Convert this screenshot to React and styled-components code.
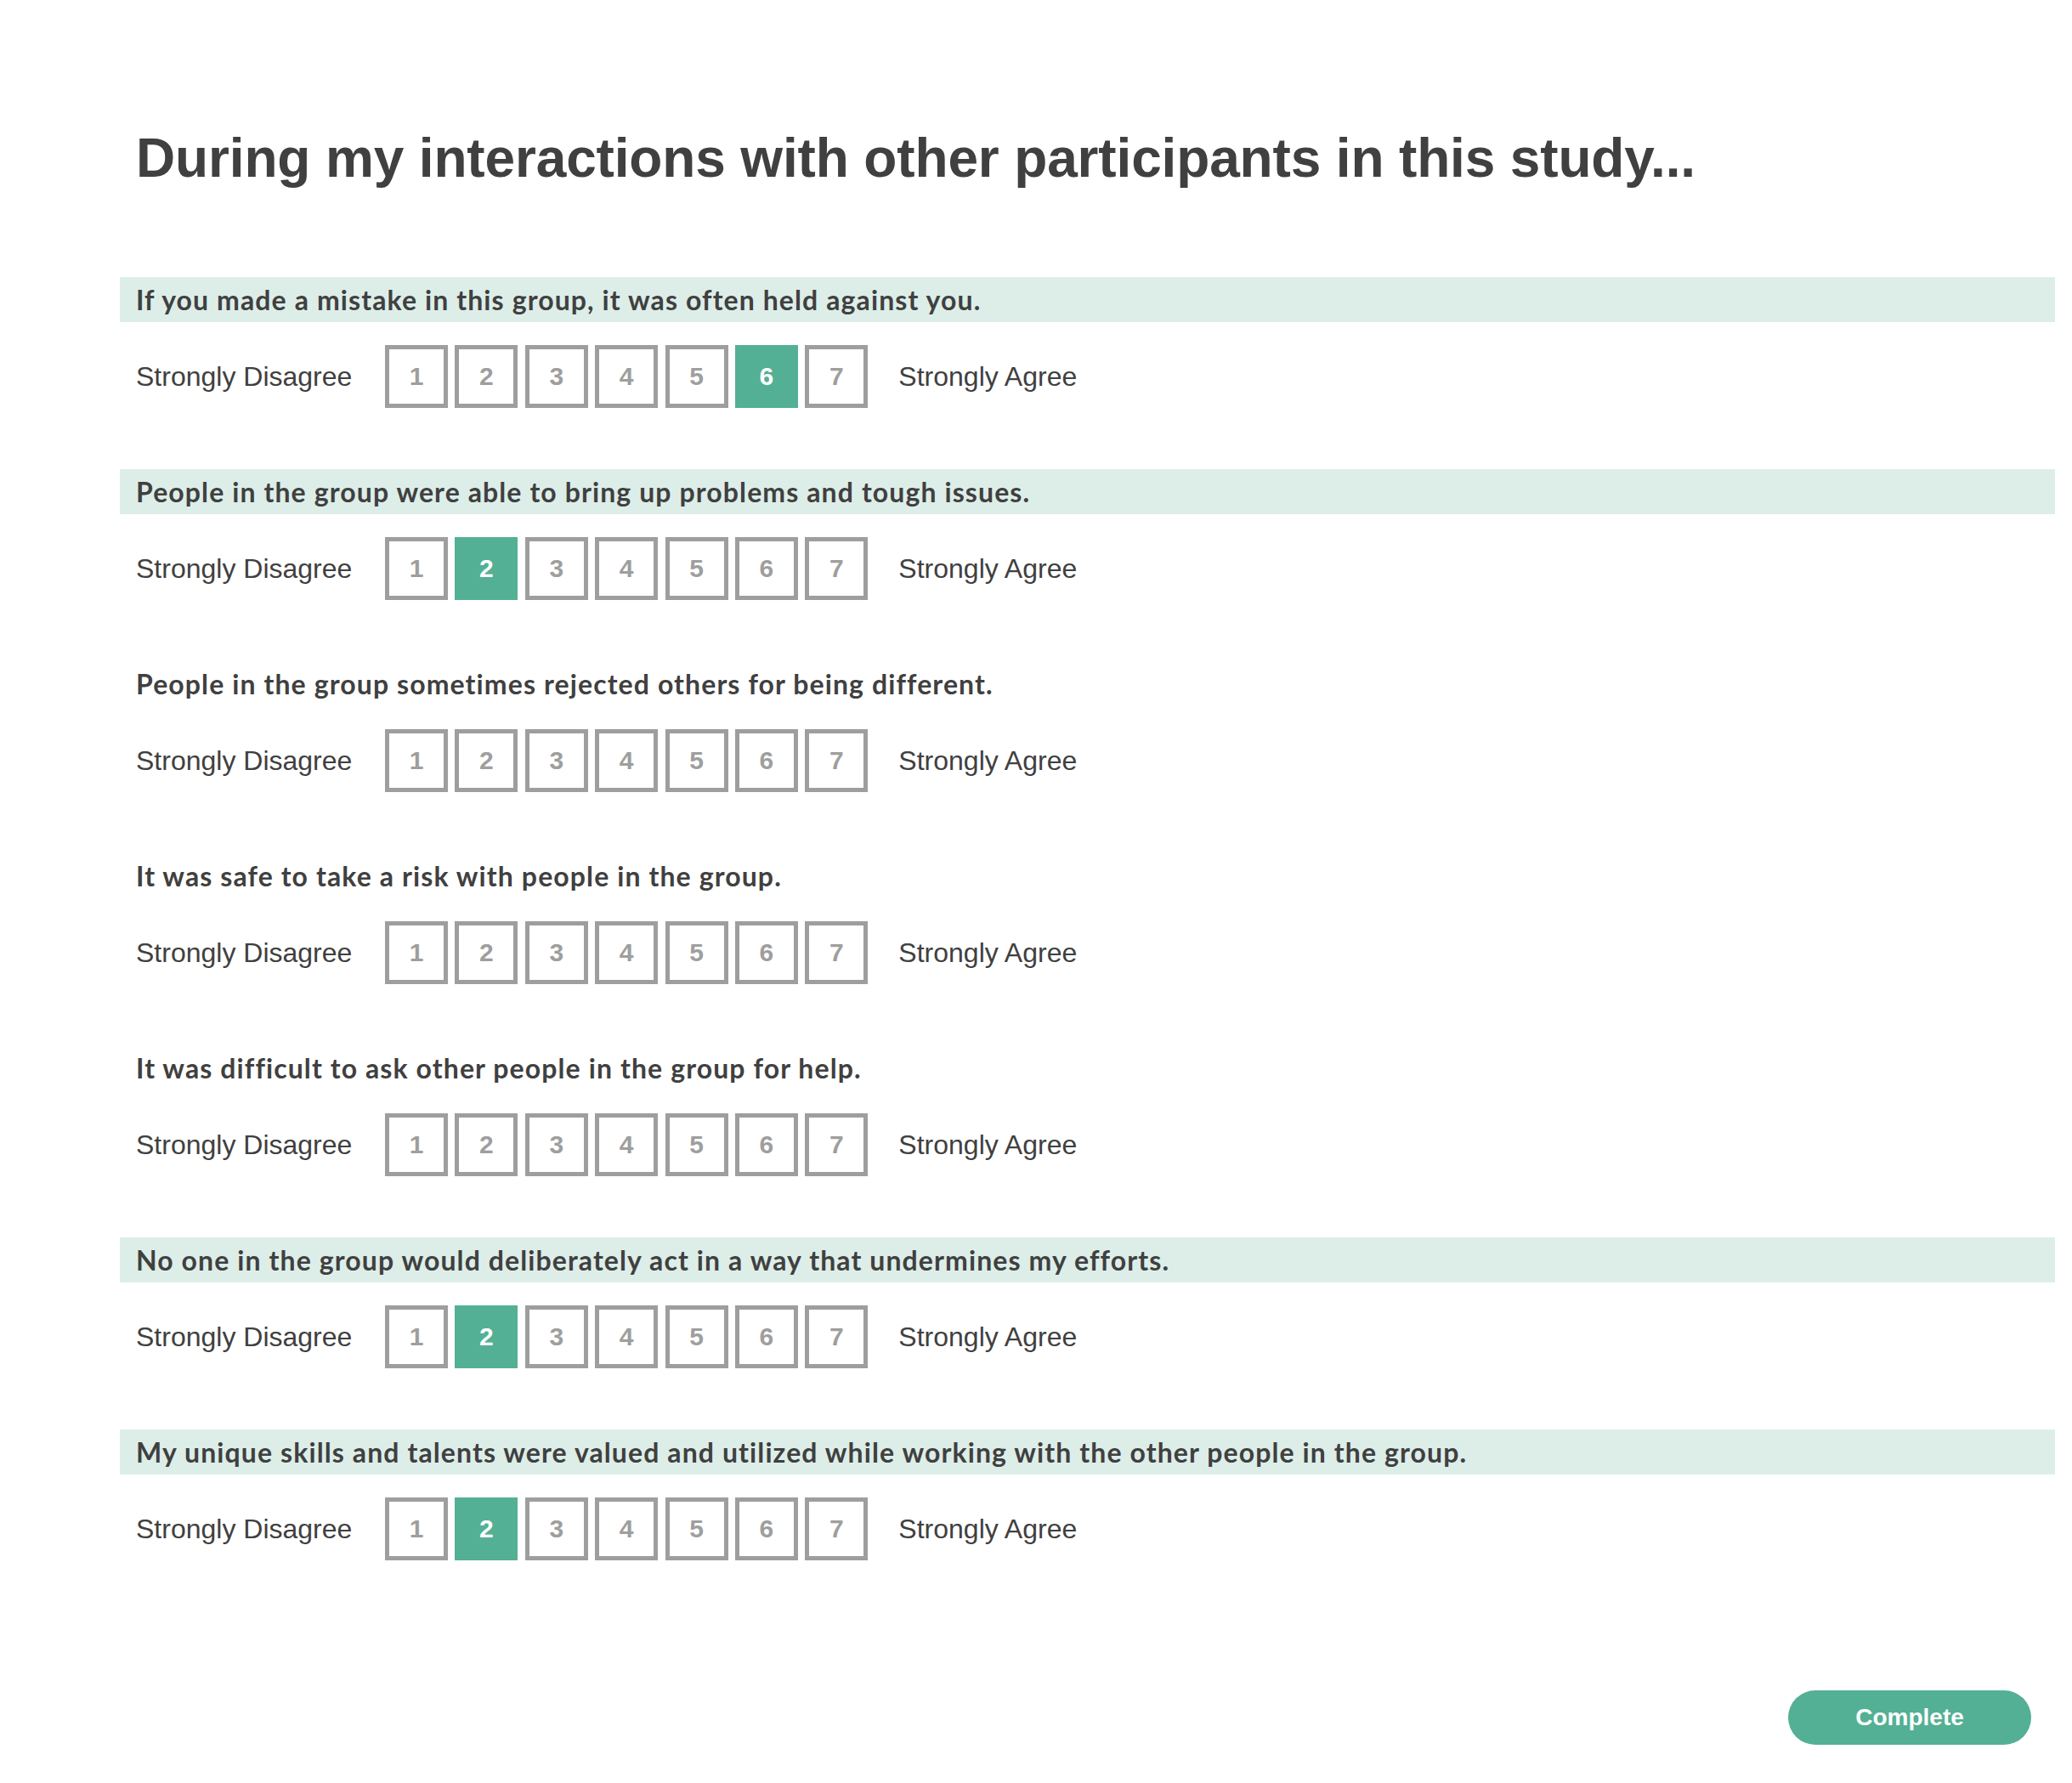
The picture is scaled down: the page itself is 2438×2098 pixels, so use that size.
import React, { useState } from "react";
import styled, { createGlobalStyle } from "styled-components";

const GlobalStyle = createGlobalStyle`
  html, body {
    margin: 0;
    padding: 0;
    background: #ffffff;
  }
  body {
    font-family: "Liberation Sans", Arial, sans-serif;
    color: #404040;
  }
`;

const questions = [
  { text: "If you made a mistake in this group, it was often held against you.", value: 6 },
  { text: "People in the group were able to bring up problems and tough issues.", value: 2 },
  { text: "People in the group sometimes rejected others for being different.", value: null },
  { text: "It was safe to take a risk with people in the group.", value: null },
  { text: "It was difficult to ask other people in the group for help.", value: null },
  { text: "No one in the group would deliberately act in a way that undermines my efforts.", value: 2 },
  { text: "My unique skills and talents were valued and utilized while working with the other people in the group.", value: 2 },
];

const Page = styled.main`
  width: 2438px;
  min-height: 2098px;
  box-sizing: border-box;
  padding: 154px 20px 0 141px;
  display: flex;
  flex-direction: column;
`;

const Title = styled.h1`
  margin: 0 0 108px 19px;
  font-family: "Liberation Sans", Arial, sans-serif;
  font-weight: 700;
  font-size: 64px;
  line-height: 64px;
  letter-spacing: -0.15px;
  color: #404040;
`;

const List = styled.div`
  display: flex;
  flex-direction: column;
  gap: 72px;
`;

const Question = styled.section`
  display: flex;
  flex-direction: column;
  gap: 27px;
`;

const Prompt = styled.div`
  height: 53px;
  display: flex;
  align-items: center;
  padding-left: 19px;
  background: ${(p) => (p.$answered ? "#ddeee9" : "transparent")};
  font-family: "Lato", "Open Sans", sans-serif;
  font-weight: 700;
  font-size: 32px;
  letter-spacing: 1.1px;
  color: #404040;
`;

const Scale = styled.div`
  display: flex;
  align-items: center;
  padding-left: 19px;
`;

const EndLabel = styled.span`
  font-size: 32px;
  color: #404040;
  width: ${(p) => p.$w || "auto"};
`;

const Boxes = styled.div`
  display: flex;
  gap: 8.4px;
  margin: 0 36px 0 37px;
`;

const Box = styled.button`
  width: 74px;
  height: 74px;
  box-sizing: border-box;
  padding: 0;
  border: 5px solid ${(p) => (p.$on ? "#53b094" : "#9e9e9e")};
  background: ${(p) => (p.$on ? "#53b094" : "#ffffff")};
  color: ${(p) => (p.$on ? "#ffffff" : "#9e9e9e")};
  font-family: "Liberation Sans", Arial, sans-serif;
  font-weight: 700;
  font-size: 30px;
  display: flex;
  align-items: center;
  justify-content: center;
  cursor: pointer;
`;

const Footer = styled.div`
  display: flex;
  justify-content: flex-end;
  padding: 153px 28px 0 0;
`;

const CompleteButton = styled.button`
  width: 286px;
  height: 64px;
  border: none;
  border-radius: 32px;
  background: #53b094;
  color: #ffffff;
  font-family: "Liberation Sans", Arial, sans-serif;
  font-weight: 700;
  font-size: 28px;
  cursor: pointer;
`;

function Item({ q }) {
  const [value, setValue] = useState(q.value);
  return (
    <Question>
      <Prompt $answered={value != null}>{q.text}</Prompt>
      <Scale>
        <EndLabel $w="256px">Strongly Disagree</EndLabel>
        <Boxes>
          {[1, 2, 3, 4, 5, 6, 7].map((n) => (
            <Box key={n} $on={value === n} onClick={() => setValue(n)}>
              {n}
            </Box>
          ))}
        </Boxes>
        <EndLabel>Strongly Agree</EndLabel>
      </Scale>
    </Question>
  );
}

export default function App() {
  return (
    <>
      <GlobalStyle />
      <Page>
        <Title>During my interactions with other participants in this study...</Title>
        <List>
          {questions.map((q, i) => (
            <Item key={i} q={q} />
          ))}
        </List>
        <Footer>
          <CompleteButton>Complete</CompleteButton>
        </Footer>
      </Page>
    </>
  );
}
